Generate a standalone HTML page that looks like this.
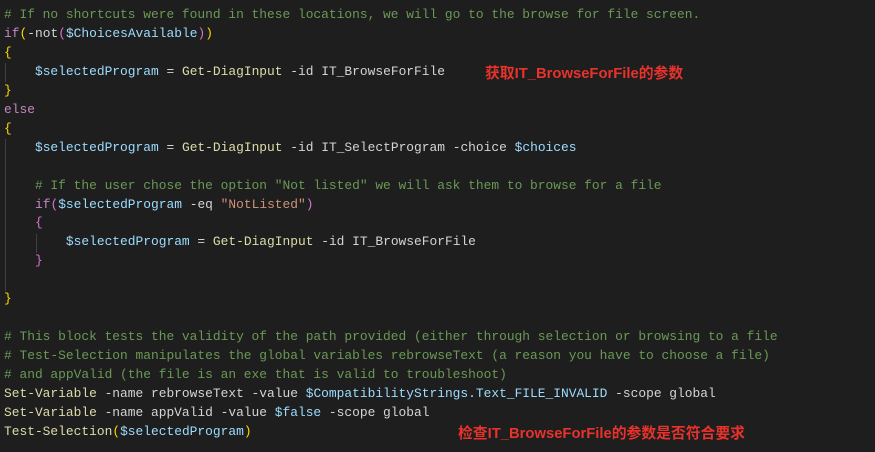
<!DOCTYPE html>
<html><head><meta charset="utf-8"><style>
html,body{margin:0;padding:0;background:#1e1e1e;width:875px;height:452px;overflow:hidden}
.code{position:absolute;left:4px;top:6px;font-family:"Liberation Mono",monospace;font-size:12.9px;line-height:18.95px;color:#d4d4d4;white-space:pre}
.c{color:#6a9955}.k{color:#c586c0}.v{color:#9cdcfe}.f{color:#dcdcaa}.s{color:#ce9178}
.b1{color:#ffd700}.b2{color:#da70d6}.b3{color:#179fff}
.g{position:absolute;width:1px;background:#404040}
.ann{position:absolute;font-family:"Liberation Sans","Noto Sans CJK SC",sans-serif;font-weight:bold;font-size:14.8px;color:#e8322c}
</style></head><body>
<div class="g" style="left:5px;top:63px;height:19px"></div>
<div class="g" style="left:5px;top:139px;height:152px"></div>
<div class="g" style="left:36px;top:234px;height:19px"></div>
<div class="code"><span class="c"># If no shortcuts were found in these locations, we will go to the browse for file screen.</span>
<span class="k">if</span><span class="b1">(</span>-not<span class="b2">(</span><span class="v">$ChoicesAvailable</span><span class="b2">)</span><span class="b1">)</span>
<span class="b1">{</span>
    <span class="v">$selectedProgram</span> = <span class="f">Get-DiagInput</span> -id IT_BrowseForFile
<span class="b1">}</span>
<span class="k">else</span>
<span class="b1">{</span>
    <span class="v">$selectedProgram</span> = <span class="f">Get-DiagInput</span> -id IT_SelectProgram -choice <span class="v">$choices</span>

    <span class="c"># If the user chose the option "Not listed" we will ask them to browse for a file</span>
    <span class="k">if</span><span class="b2">(</span><span class="v">$selectedProgram</span> -eq <span class="s">"NotListed"</span><span class="b2">)</span>
    <span class="b2">{</span>
        <span class="v">$selectedProgram</span> = <span class="f">Get-DiagInput</span> -id IT_BrowseForFile
    <span class="b2">}</span>

<span class="b1">}</span>

<span class="c"># This block tests the validity of the path provided (either through selection or browsing to a file</span>
<span class="c"># Test-Selection manipulates the global variables rebrowseText (a reason you have to choose a file)</span>
<span class="c"># and appValid (the file is an exe that is valid to troubleshoot)</span>
<span class="f">Set-Variable</span> -name rebrowseText -value <span class="v">$CompatibilityStrings.Text_FILE_INVALID</span> -scope global
<span class="f">Set-Variable</span> -name appValid -value <span class="v">$false</span> -scope global
<span class="f">Test-Selection</span><span class="b1">(</span><span class="v">$selectedProgram</span><span class="b1">)</span></div>
<div class="ann" style="left:485px;top:62px">获取IT_BrowseForFile的参数</div>
<div class="ann" style="left:458px;top:422px">检查IT_BrowseForFile的参数是否符合要求</div>
</body></html>
